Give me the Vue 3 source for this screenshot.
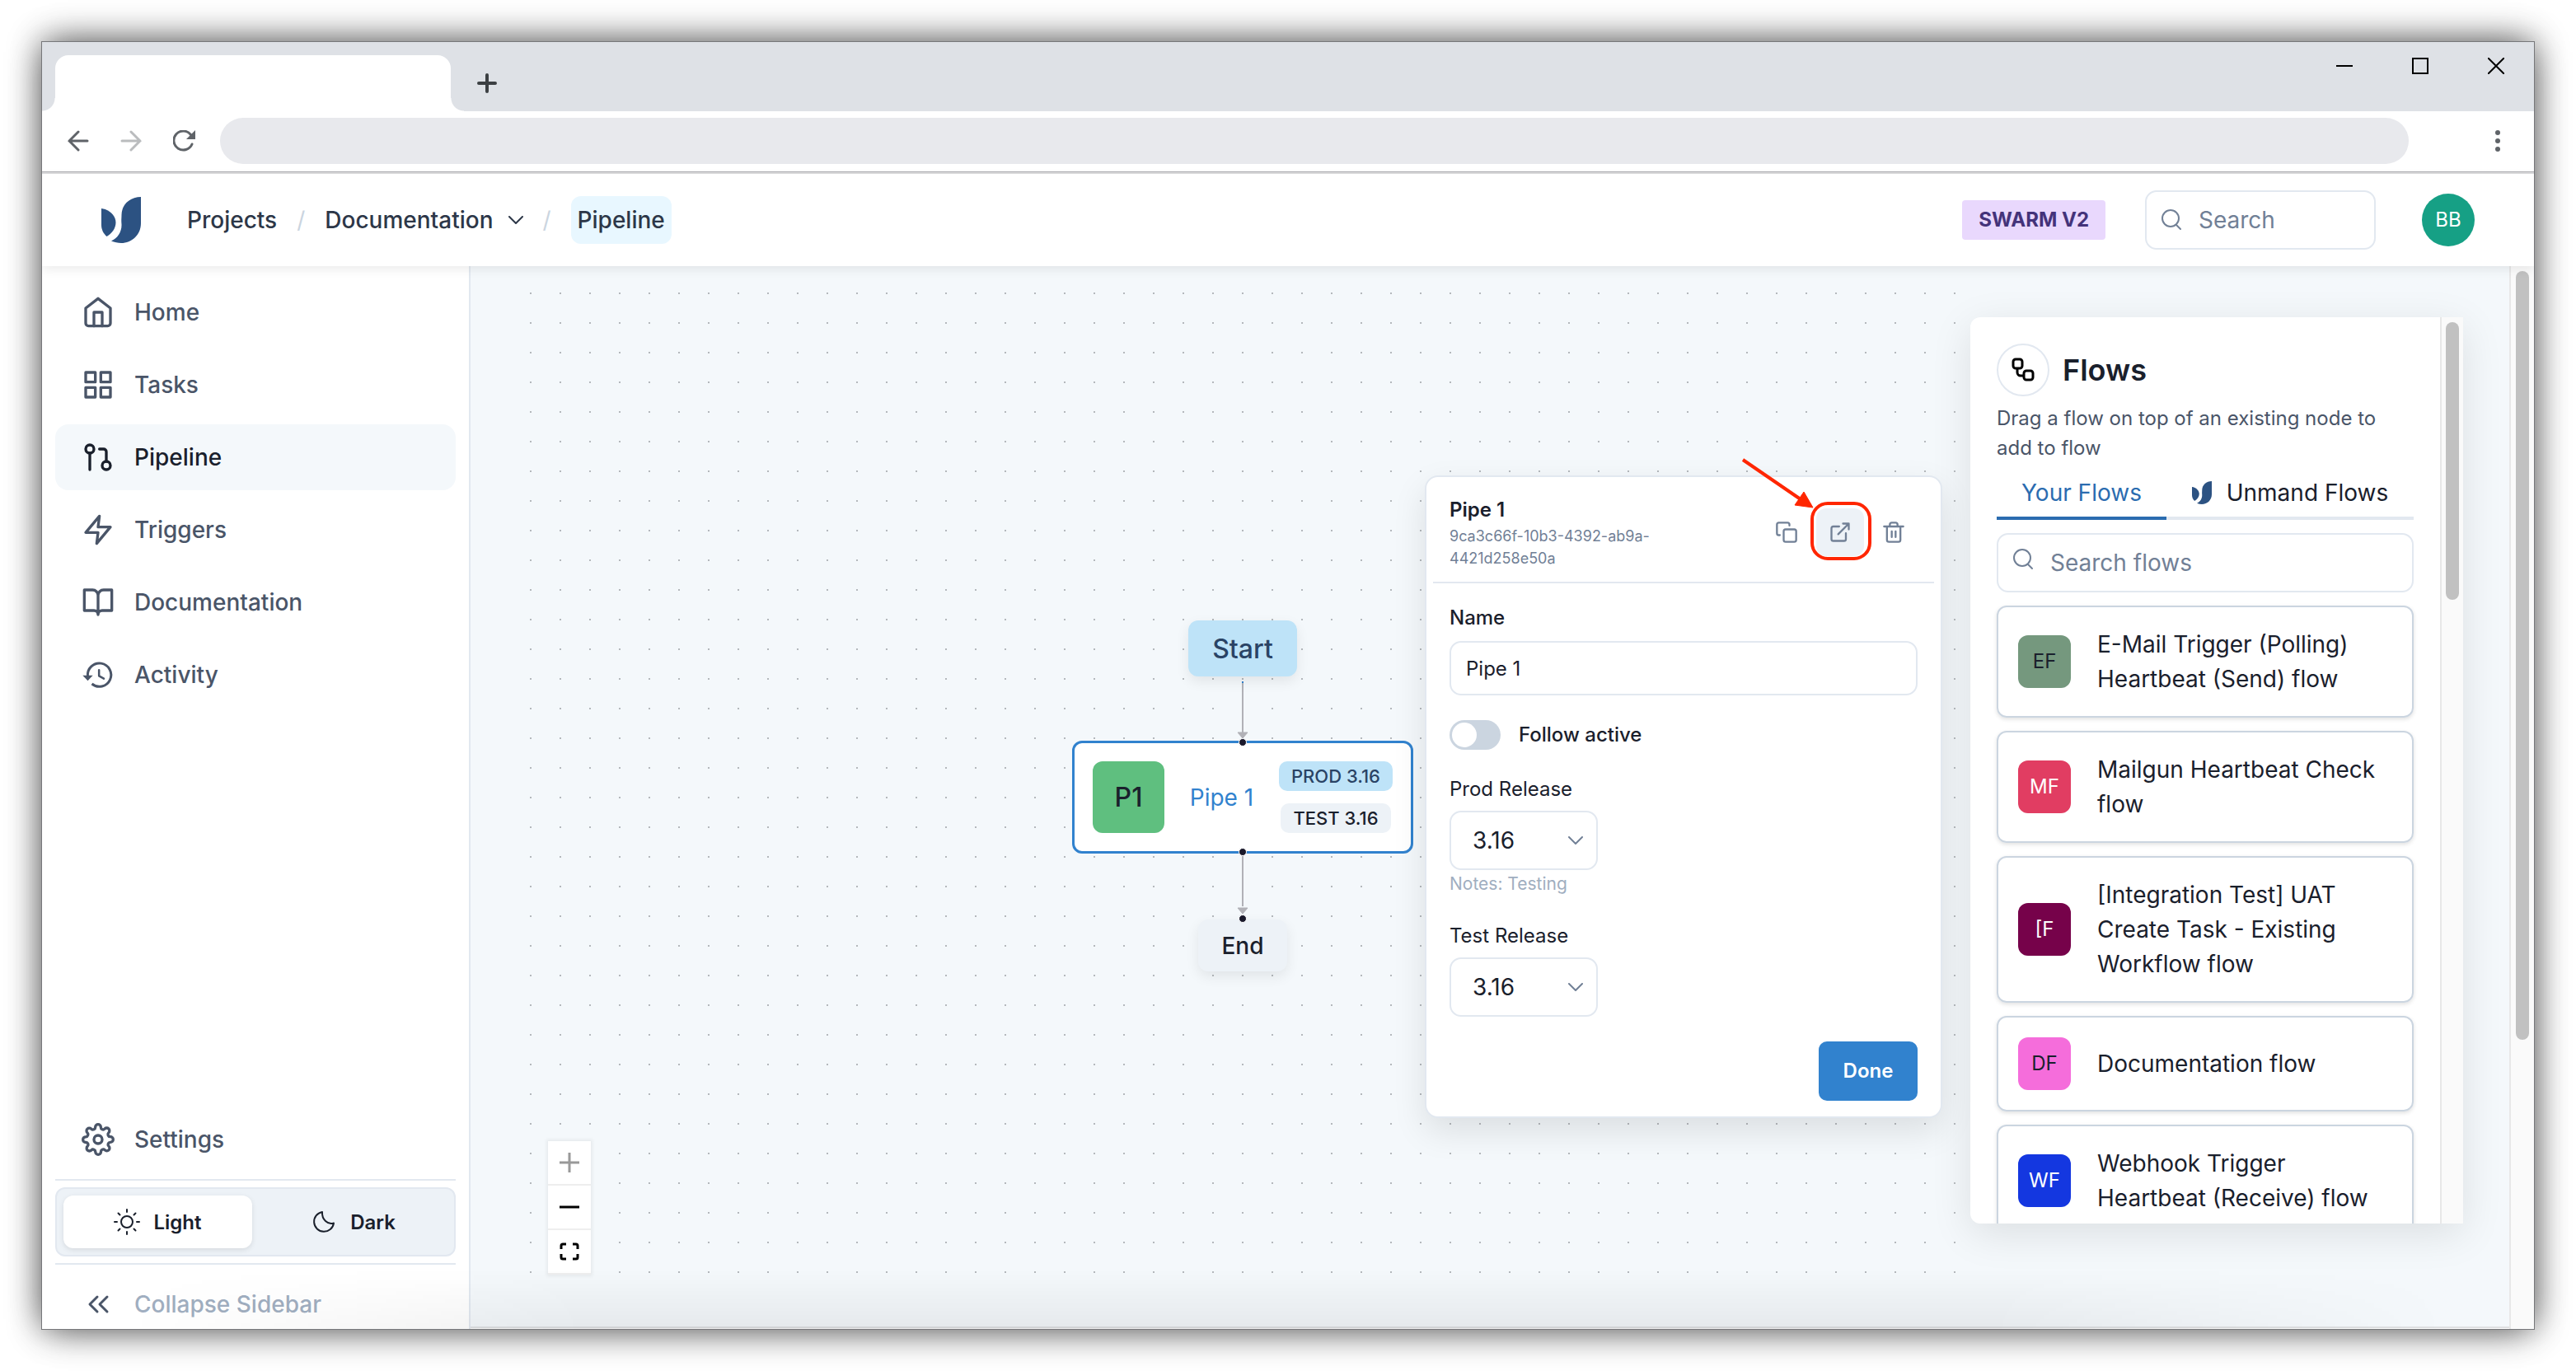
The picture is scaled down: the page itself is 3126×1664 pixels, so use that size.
<script setup>
import { ref } from 'vue'

const navItems = [
  { label: 'Home', icon: 'home' },
  { label: 'Tasks', icon: 'grid' },
  { label: 'Pipeline', icon: 'pipeline', active: true },
  { label: 'Triggers', icon: 'zap' },
  { label: 'Documentation', icon: 'book' },
  { label: 'Activity', icon: 'history' },
]

const flows = [
  { initials: 'EF', name: 'E-Mail Trigger (Polling) Heartbeat (Send) flow', bg: '#75987e', fg: '#1a202c' },
  { initials: 'MF', name: 'Mailgun Heartbeat Check flow', bg: '#e13d62', fg: '#ffffff' },
  { initials: '[F', name: '[Integration Test] UAT Create Task - Existing Workflow flow', bg: '#76024a', fg: '#ffffff' },
  { initials: 'DF', name: 'Documentation flow', bg: '#f56ddb', fg: '#1a202c' },
  { initials: 'WF', name: 'Webhook Trigger Heartbeat (Receive) flow', bg: '#1437e0', fg: '#ffffff' },
]

const pipeName = ref('Pipe 1')
const followActive = ref(false)
const prodRelease = ref('3.16')
const testRelease = ref('3.16')
</script>

<template>
  <div class="stage">
    <div class="window">
      <div class="tabstrip">
        <div class="tab"></div>
        <button class="plain newtab" aria-label="New tab">
          <svg width="24" height="24" viewBox="0 0 24 24" stroke="#3c4043" stroke-width="4" stroke-linecap="round"><path d="M12 2v20M2 12h20" /></svg>
        </button>
        <div class="winctl">
          <button class="plain" aria-label="Minimize"><svg width="20" height="20"><path d="M0 10h20" stroke="#000" stroke-width="2" /></svg></button>
          <button class="plain" aria-label="Maximize"><svg width="20" height="20"><rect x="1" y="1" width="18" height="18" fill="none" stroke="#000" stroke-width="2" /></svg></button>
          <button class="plain" aria-label="Close"><svg width="20" height="20"><path d="M0 0l20 20M20 0L0 20" stroke="#000" stroke-width="2" /></svg></button>
        </div>
      </div>

      <div class="toolbar">
        <button class="plain" aria-label="Back"><svg width="26" height="26" fill="none" stroke="#5f6368" stroke-width="3" stroke-linecap="round"><path d="M24 13H2M13 2L2 13l11 11" /></svg></button>
        <button class="plain" aria-label="Forward"><svg width="26" height="26" fill="none" stroke="#babcbe" stroke-width="3" stroke-linecap="round"><path d="M2 13h22M13 2l11 11-11 11" /></svg></button>
        <button class="plain" aria-label="Reload"><svg width="28" height="26" fill="none"><path d="M23 17A11.500 11.500 0 1 1 21.500 5.500" stroke="#5f6368" stroke-width="3" stroke-linecap="round" /><path d="M27 0v11H16z" fill="#5f6368" /></svg></button>
        <div class="address"></div>
        <button class="plain" aria-label="Menu"><svg width="8" height="26" fill="#5f6368"><circle cx="4" cy="3" r="3" /><circle cx="4" cy="13" r="3" /><circle cx="4" cy="23" r="3" /></svg></button>
      </div>

      <header class="header">
        <svg class="logo" width="48" height="56" viewBox="0 0 48 56" fill="#2c5282"><path d="M0 14C10 15 17.500 23 17.500 31C17.500 38 13 44 6.500 48C2 44 0 39 0 34Z" /><path d="M48 0V32C48 46 37 56 24 56C20 56 16 55 12 53.500C20 50 25 42 24.500 33C24 28 24.500 26 24.500 22C24.500 9 35 0 48 0Z" /></svg>
        <nav class="crumbs" aria-label="Breadcrumb">
          <a href="#">Projects</a>
          <span class="slash">/</span>
          <a href="#" class="crumb-menu">Documentation
            <svg width="18" height="10" fill="none" stroke="#2d3748" stroke-width="2" stroke-linecap="round" stroke-linejoin="round"><path d="M1 1l8 8 8-8" /></svg>
          </a>
          <span class="slash">/</span>
          <a href="#" class="current">Pipeline</a>
        </nav>
        <span class="version">SWARM V2</span>
        <label class="search top-search">
          <svg width="26" height="26" viewBox="0 0 26 26" fill="none" stroke="#718096" stroke-width="2" stroke-linecap="round"><circle cx="12" cy="11" r="10" /><path d="M19 19l5 5" /></svg>
          <input type="text" placeholder="Search" aria-label="Search" />
        </label>
        <span class="user">BB</span>
      </header>

      <div class="body">
        <aside class="sidebar">
          <a v-for="item in navItems" :key="item.label" href="#" class="nav" :class="{ active: item.active }">
            <svg width="40" height="40" viewBox="0 0 24 24" fill="none" stroke="currentColor" stroke-width="2" stroke-linecap="round" stroke-linejoin="round">
              <template v-if="item.icon === 'home'"><path d="M3 9l9-7 9 7v11a2 2 0 0 1-2 2H5a2 2 0 0 1-2-2z" /><path d="M9 22V12h6v10" /></template>
              <template v-else-if="item.icon === 'grid'"><rect x="3" y="3" width="7" height="7" /><rect x="14" y="3" width="7" height="7" /><rect x="14" y="14" width="7" height="7" /><rect x="3" y="14" width="7" height="7" /></template>
              <template v-else-if="item.icon === 'pipeline'"><circle cx="18" cy="18" r="3" /><circle cx="6" cy="6" r="3" /><path d="M13 6h3a2 2 0 0 1 2 2v7M6 9v12" /></template>
              <template v-else-if="item.icon === 'zap'"><path d="M13 2L3 14h9l-1 8 10-12h-9l1-8z" /></template>
              <template v-else-if="item.icon === 'book'"><path d="M2 3h6a4 4 0 0 1 4 4v14a3 3 0 0 0-3-3H2zM22 3h-6a4 4 0 0 0-4 4v14a3 3 0 0 1 3-3h7z" /></template>
              <template v-else><path d="M4.500 13A8.500 8.500 0 1 1 7.500 18.600" stroke-width="1.800" stroke-linecap="butt" /><path d="M.8 12.500h7.400L4.500 16.300z" fill="currentColor" stroke="none" /><path d="M12.700 8.500v4.300l3.500 2" stroke-width="1.500" /></template>
            </svg>
            {{ item.label }}
          </a>
          <div class="grow"></div>
          <a href="#" class="nav">
            <svg width="40" height="40" viewBox="0 0 24 24" fill="none" stroke="currentColor" stroke-width="2" stroke-linecap="round" stroke-linejoin="round"><circle cx="12" cy="12" r="3" /><path d="M19.400 15a1.650 1.650 0 0 0 .33 1.820l.06.06a2 2 0 0 1 0 2.830 2 2 0 0 1-2.830 0l-.06-.06a1.650 1.650 0 0 0-1.820-.33 1.650 1.650 0 0 0-1 1.510V21a2 2 0 0 1-2 2 2 2 0 0 1-2-2v-.09A1.650 1.650 0 0 0 9 19.400a1.650 1.650 0 0 0-1.820.33l-.06.06a2 2 0 0 1-2.830 0 2 2 0 0 1 0-2.830l.06-.06a1.650 1.650 0 0 0 .33-1.820 1.650 1.650 0 0 0-1.510-1H3a2 2 0 0 1-2-2 2 2 0 0 1 2-2h.09A1.650 1.650 0 0 0 4.600 9a1.650 1.650 0 0 0-.33-1.820l-.06-.06a2 2 0 0 1 0-2.830 2 2 0 0 1 2.830 0l.06.06a1.650 1.650 0 0 0 1.820.33H9a1.650 1.650 0 0 0 1-1.510V3a2 2 0 0 1 2-2 2 2 0 0 1 2 2v.09a1.650 1.650 0 0 0 1 1.510 1.650 1.650 0 0 0 1.820-.33l.06-.06a2 2 0 0 1 2.830 0 2 2 0 0 1 0 2.830l-.06.06a1.650 1.650 0 0 0-.33 1.820V9a1.650 1.650 0 0 0 1.510 1H21a2 2 0 0 1 2 2 2 2 0 0 1-2 2h-.09a1.650 1.650 0 0 0-1.510 1z" /></svg>
            Settings
          </a>
          <hr class="rule" />
          <div class="theme">
            <button class="theme-btn on">
              <svg width="32" height="32" viewBox="0 0 32 32" fill="none" stroke="currentColor" stroke-width="2" stroke-linecap="round"><circle cx="16" cy="16" r="7" /><path d="M16 1v3M16 28v3M1 16h3M28 16h3M5.500 5.500l2 2M24.500 24.500l2 2M5.500 26.500l2-2M24.500 7.500l2-2" /></svg>
              Light
            </button>
            <button class="theme-btn">
              <svg width="32" height="32" viewBox="0 0 32 32" fill="none" stroke="currentColor" stroke-width="2" stroke-linejoin="round"><path d="M14 4A11 13 0 0 0 28 17.500A12 12 0 1 1 14 4Z" /></svg>
              Dark
            </button>
          </div>
          <hr class="rule" />
          <button class="nav collapse">
            <svg width="40" height="40" viewBox="0 0 40 40" fill="none" stroke="currentColor" stroke-width="3" stroke-linecap="round" stroke-linejoin="round"><path d="M19 11l-9 9 9 9M31 11l-9 9 9 9" /></svg>
            <span>Collapse Sidebar</span>
          </button>
        </aside>

        <div class="content">
          <main class="main">
            <section class="canvas">
              <svg class="edges" width="20" height="300" viewBox="0 0 20 300">
                <g stroke="#b1b1b7" stroke-width="2"><path d="M10 6v62M10 212v66" /></g>
                <g fill="#b1b1b7" stroke="#b1b1b7" stroke-linejoin="round"><path d="M4 67h12l-6 7zM4 280h12l-6 7z" /></g>
                <path d="M10 5v2" stroke="#3182ce" stroke-width="2" />
              </svg>
              <div class="node start">Start</div>
              <div class="node pipe">
                <span class="pipe-avatar">P1</span>
                <span class="pipe-name">Pipe 1</span>
                <span class="pipe-tags"><span class="tag prod">PROD 3.16</span><span class="tag">TEST 3.16</span></span>
                <i class="handle top"></i>
                <i class="handle bottom"></i>
              </div>
              <div class="node end">End<i class="handle top"></i></div>

              <div class="controls">
                <button aria-label="Zoom in" disabled><svg width="24" height="24"><path d="M12 0v24M0 12h24" stroke="#999" stroke-width="3" /></svg></button>
                <button aria-label="Zoom out"><svg width="24" height="24"><path d="M0 12h24" stroke="#000" stroke-width="3" /></svg></button>
                <button aria-label="Fit view"><svg width="24" height="22" fill="none" stroke="#000" stroke-width="3"><path d="M2 8V4a2 2 0 0 1 2-2h4M16 2h4a2 2 0 0 1 2 2v4M22 14v4a2 2 0 0 1-2 2h-4M8 20H4a2 2 0 0 1-2-2v-4" /></svg></button>
              </div>

              <form class="popover" @submit.prevent>
                <div class="pop-head">
                  <div class="pop-title">
                    <h2>Pipe 1</h2>
                    <p>9ca3c66f-10b3-4392-ab9a-4421d258e50a</p>
                  </div>
                  <button type="button" class="icon-btn" aria-label="Duplicate"><svg width="28" height="28" viewBox="0 0 24 24"><rect x="9" y="9" width="13" height="13" rx="2" /><path d="M5 15H4a2 2 0 0 1-2-2V4a2 2 0 0 1 2-2h9a2 2 0 0 1 2 2v1" /></svg></button>
                  <button type="button" class="icon-btn hover" aria-label="Open">
                    <svg width="28" height="28" viewBox="0 0 24 24"><path d="M18 13v6a2 2 0 0 1-2 2H5a2 2 0 0 1-2-2V8a2 2 0 0 1 2-2h6M15 3h6v6M10 14L21 3" /></svg>
                    <svg class="callout" width="164" height="132" viewBox="0 0 164 132"><rect class="ring" x="88" y="59" width="70" height="67" rx="19" /><path class="shaft" d="M4 6L74 54" /><path class="tip" d="M89 64L78 45L67 61Z" /></svg>
                  </button>
                  <button type="button" class="icon-btn" aria-label="Delete"><svg width="28" height="28" viewBox="0 0 24 24"><path d="M2 6h20M19 6v14a2 2 0 0 1-2 2H7a2 2 0 0 1-2-2V6m3 0V4a2 2 0 0 1 2-2h4a2 2 0 0 1 2 2v2M10 11v6M14 11v6" /></svg></button>
                </div>
                <div class="pop-body">
                  <div class="field name-field">
                    <label class="medium" for="pipe-name">Name</label>
                    <input id="pipe-name" v-model="pipeName" class="text-input" type="text" />
                  </div>
                  <label class="switch"><input v-model="followActive" type="checkbox" />Follow active</label>
                  <div class="field">
                    <label for="prod-release">Prod Release</label>
                    <span class="select"><select id="prod-release" v-model="prodRelease"><option>3.16</option></select><svg width="18" height="10"><path d="M1 1l8 8 8-8" /></svg></span>
                    <p class="notes">Notes: Testing</p>
                  </div>
                  <div class="field">
                    <label for="test-release">Test Release</label>
                    <span class="select"><select id="test-release" v-model="testRelease"><option>3.16</option></select><svg width="18" height="10"><path d="M1 1l8 8 8-8" /></svg></span>
                  </div>
                  <button type="submit" class="done">Done</button>
                </div>
              </form>
            </section>

            <section class="panel">
              <div class="panel-content">
                <div class="panel-title">
                  <span class="badge"><svg width="32" height="32" viewBox="0 0 32 32" fill="none" stroke="#000" stroke-width="3"><rect x="4" y="3" width="11" height="11" rx="3" /><rect x="17" y="17" width="11" height="11" rx="3" /><path d="M9 14v5a4 4 0 0 0 4 4h4" /></svg></span>
                  <h1>Flows</h1>
                </div>
                <p class="hint">Drag a flow on top of an existing node to add to flow</p>
                <div class="tabs">
                  <button class="tab-btn on">Your Flows</button>
                  <button class="tab-btn">
                    <svg width="24" height="28" viewBox="0 0 48 56" fill="#2c5282"><path d="M0 14C10 15 17.500 23 17.500 31C17.500 38 13 44 6.500 48C2 44 0 39 0 34Z" /><path d="M48 0V32C48 46 37 56 24 56C20 56 16 55 12 53.500C20 50 25 42 24.500 33C24 28 24.500 26 24.500 22C24.500 9 35 0 48 0Z" /></svg>
                    Unmand Flows
                  </button>
                </div>
                <label class="search">
                  <svg class="raised" width="26" height="26" viewBox="0 0 26 26" fill="none" stroke="#718096" stroke-width="2" stroke-linecap="round"><circle cx="12" cy="11" r="10" /><path d="M19 19l5 5" /></svg>
                  <input type="text" placeholder="Search flows" aria-label="Search flows" />
                </label>
                <article v-for="flow in flows" :key="flow.initials" class="card">
                  <span class="avatar" :style="{ background: flow.bg, color: flow.fg }">{{ flow.initials }}</span>
                  <span>{{ flow.name }}</span>
                </article>
              </div>
              <div class="track"><div class="thumb short"></div></div>
            </section>
          </main>
        </div>
        <div class="track page-track"><div class="thumb"></div></div>
      </div>
      <div class="fade"></div>
    </div>
  </div>
</template>

<style>
body { background: #fff; }
</style>

<style scoped>
* { box-sizing: border-box; }
h1, h2, p { margin: 0; }
a { color: inherit; text-decoration: none; }
svg { flex: none; display: block; }
button, input, select { font: inherit; color: inherit; }
.plain { border: 0; background: none; padding: 0; }

.stage {
  height: 100vh;
  padding: 50px;
  display: flex;
  font-family: Inter, "Liberation Sans", sans-serif;
  font-size: 28px;
  color: #1a202c;
}
.window {
  position: relative;
  flex: 1;
  min-width: 0;
  display: flex;
  flex-direction: column;
  overflow: hidden;
  background: #fff;
  border: 1px solid #76777a;
  box-shadow: 0 0 38px rgba(0, 0, 0, .45), 0 10px 44px -10px rgba(0, 0, 0, .3), 0 -10px 44px -10px rgba(0, 0, 0, .3);
}

/* Browser chrome */
.tabstrip { display: flex; align-items: flex-end; height: 84px; padding: 0 36px 0 16px; background: #dee1e6; flex: none; }
.tab { position: relative; width: 480px; height: 68px; background: #fff; border-radius: 16px 16px 0 0; }
.tab::before, .tab::after { content: ""; position: absolute; bottom: 0; width: 16px; height: 16px; }
.tab::before { left: -16px; background: radial-gradient(circle at 0 0, transparent 15px, #fff 16px); }
.tab::after { right: -16px; background: radial-gradient(circle at 100% 0, transparent 15px, #fff 16px); }
.newtab { margin: 0 0 22px 32px; }
.winctl { display: flex; gap: 72px; margin-left: auto; margin-bottom: 45px; }
.toolbar { display: flex; align-items: center; gap: 38px; height: 76px; padding: 0 40px 3px 31px; border-bottom: 2px solid #dbdbdd; box-shadow: inset 0 -1px #b0b0b4; flex: none; }
.address { flex: 1; height: 56px; margin: 0 66px 0 -9px; border-radius: 28px; background: #e8e9ed; }

/* App header */
.header { position: relative; z-index: 2; display: flex; align-items: center; height: 112px; padding: 0 72px; background: #fff; box-shadow: 0 4px 12px rgba(0, 0, 0, .08); color: #2d3748; flex: none; }
.crumbs { display: flex; align-items: center; gap: 24px; margin-left: 56px; font-weight: 500; }
.crumb-menu { display: flex; align-items: center; gap: 18px; }
.slash { color: #cbd5e0; font-weight: 400; }
.current { line-height: 58px; padding: 0 8px; border-radius: 12px; background: #e8f7ff; }
.version { margin-left: auto; padding: 0 20px; line-height: 48px; font-size: 24px; font-weight: 700; color: #44337a; background: #e9d8fd; border-radius: 4px; }
.search { display: flex; align-items: center; gap: 20px; height: 72px; padding: 0 18px 0 17px; border: 2px solid #e2e8f0; border-radius: 14px; background: #fff; }
.search input { flex: 1; min-width: 0; border: 0; outline: 0; padding: 0; background: none; }
.search input::placeholder { color: #718096; opacity: 1; }
.top-search { width: 280px; margin: 0 56px 0 48px; }
.raised { margin-bottom: 8px; }
.user { width: 64px; line-height: 64px; border-radius: 50%; background: #16a085; color: #fff; font-size: 24px; text-align: center; }

/* Sidebar */
.body { flex: 1; min-height: 0; display: flex; }
.sidebar { width: 520px; flex: none; display: flex; flex-direction: column; gap: 8px; padding: 16px 16px 0; border-right: 2px solid #e2e8f0; background: #fff; }
.nav { display: flex; align-items: center; gap: 24px; height: 80px; padding: 0 32px; border: 0; border-radius: 16px; background: none; color: #4a5568; font-weight: 500; flex: none; }
.nav.active { background: #f4f8fb; color: #1a202c; }
.grow { flex: 1; }
.rule { width: 100%; margin: 0; border: 0; border-top: 2px solid #e2e8f0; flex: none; }
.theme { display: flex; gap: 8px; height: 84px; padding: 8px; border: 2px solid #e2e8f0; border-radius: 12px; background: #edf2f7; flex: none; }
.theme-btn { flex: 1; display: flex; align-items: center; justify-content: center; gap: 16px; border: 0; border-radius: 12px; background: none; font-size: 24px; font-weight: 600; }
.theme-btn.on { background: #fff; box-shadow: 0 2px 6px rgba(0, 0, 0, .1); }
.collapse { height: 70px; padding-top: 10px; }
.collapse span { color: #a0aec0; }

/* Work area */
.content { flex: 1; min-width: 0; display: flex; background: #fafafa; padding-bottom: 1px; }
.main { flex: 1; min-width: 0; display: flex; background: #f4f8fb; border-bottom: 2px solid #dfe1e3; padding: 0 56px 0 48px; }
.canvas { position: relative; flex: 1; min-width: 0; margin: 15px 0 48px; background: radial-gradient(circle, #b4b8bc 1px, transparent 1px) 7px 0 / 36px 36px; }

.edges { position: absolute; left: 879px; top: 484px; }
.node { position: absolute; display: flex; align-items: center; justify-content: center; border-radius: 12px; box-shadow: 0 6px 16px rgba(0, 0, 0, .08); }
.start { left: 823px; top: 415px; width: 132px; height: 68px; background: #bee3f8; color: #2a4365; font-size: 32px; font-weight: 500; }
.pipe { left: 682px; top: 561px; width: 414px; height: 137px; padding: 0 22px; justify-content: space-between; background: #fff; border: 3px solid #3182ce; box-shadow: none; }
.pipe-avatar { width: 87px; line-height: 87px; border-radius: 12px; background: #5fbf7f; font-size: 32px; font-weight: 500; text-align: center; }
.pipe-name { color: #3182ce; }
.pipe-tags { display: flex; flex-direction: column; align-items: center; gap: 15px; }
.tag { padding: 0 15px; line-height: 36px; border-radius: 10px; background: #edf2f7; font-size: 22px; font-weight: 500; }
.tag.prod { background: #bee3f8; color: #2a4365; }
.end { left: 835px; top: 778px; width: 108px; height: 63px; background: #edf2f7; font-weight: 500; }
.handle { position: absolute; left: calc(50% - 5px); width: 10px; height: 10px; border: 1px solid #fff; border-radius: 50%; background: #1a192b; }
.handle.top { top: -6px; }
.handle.bottom { bottom: -6px; }

.controls { position: absolute; left: 46px; bottom: 15px; width: 52px; box-shadow: 0 0 4px 2px rgba(0, 0, 0, .06); }
.controls button { display: flex; align-items: center; justify-content: center; width: 52px; height: 54px; padding: 0; border: 0; border-bottom: 2px solid #eee; background: #fff; }

/* Node popover */
.popover { position: absolute; left: 1110px; top: 239px; width: 628px; border: 2px solid #e2e8f0; border-radius: 16px; background: #fff; font-size: 24px; line-height: 36px; box-shadow: 0 16px 40px rgba(0, 0, 0, .1); }
.pop-head { display: flex; align-items: center; gap: 7px; margin: 0 8px; padding: 22px 20px 15px; border-bottom: 2px solid #e2e8f0; }
.pop-title { flex: 1; padding-right: 80px; }
.pop-title h2 { font-size: 24px; font-weight: 600; }
.pop-title p { font-size: 18px; line-height: 27px; color: #718096; }
.icon-btn { position: relative; display: flex; align-items: center; justify-content: center; width: 58px; height: 58px; padding: 0; border: 0; border-radius: 12px; background: none; }
.icon-btn.hover { background: #edf2f7; }
.icon-btn svg { fill: none; stroke: #718096; stroke-width: 2; stroke-linecap: round; stroke-linejoin: round; }
.icon-btn .callout { position: absolute; left: -93px; top: -65px; stroke: #ff2600; stroke-width: 4; stroke-linecap: butt; pointer-events: none; }
.callout .tip { fill: #ff2600; stroke-width: 1; }
.pop-body { display: flex; flex-direction: column; gap: 30px; padding: 24px 28px 19px; }
.field { display: flex; flex-direction: column; gap: 8px; }
.name-field { gap: 10px; }
.medium, .switch { font-weight: 500; }
.text-input { height: 66px; padding: 0 18px; border: 2px solid #e2e8f0; border-radius: 14px; background: #fff; outline: 0; }
.switch { display: flex; align-items: center; gap: 22px; }
.switch input { appearance: none; position: relative; width: 62px; height: 36px; margin: 0; border-radius: 18px; background: #cbd5e0; }
.switch input::before { content: ""; position: absolute; left: 3px; top: 3px; width: 30px; height: 30px; border-radius: 50%; background: #fff; }
.select { position: relative; width: 180px; font-size: 28px; }
.select select { appearance: none; display: block; width: 100%; height: 72px; padding: 0 26px; border: 2px solid #e2e8f0; border-radius: 14px; background: #fff; }
.select svg { position: absolute; right: 18px; top: 31px; fill: none; stroke: #718096; stroke-width: 2; stroke-linecap: round; stroke-linejoin: round; pointer-events: none; }
.notes { margin-top: -6px; font-size: 21px; line-height: 30px; color: #a0aec0; }
.done { align-self: flex-end; width: 120px; height: 72px; padding: 0; border: 0; border-radius: 10px; background: #3182ce; color: #fff; font-weight: 600; }

/* Flow library */
.panel { flex: none; width: 598px; display: flex; margin: 62px 0 125px; background: #fff; border-radius: 12px 0 0 12px; box-shadow: 0 12px 50px rgba(0, 0, 0, .1); overflow: hidden; }
.panel-content { flex: 1; min-width: 0; padding: 32px 32px 0; overflow: hidden; }
.panel-title { display: flex; align-items: center; gap: 16px; height: 64px; }
.panel-title h1 { font-size: 36px; font-weight: 600; }
.badge { display: flex; align-items: center; justify-content: center; width: 64px; height: 64px; border: 2px solid #e2e8f0; border-radius: 50%; }
.hint { margin-top: 9px; font-size: 24px; line-height: 36px; color: #4a5568; }
.tabs { display: flex; margin-top: 5px; }
.tab-btn { display: flex; align-items: center; justify-content: center; gap: 18px; height: 64px; padding: 2px 30px 0; border: 0; border-bottom: 4px solid #e2e8f0; background: none; white-space: nowrap; }
.tab-btn:last-child { flex: 1; }
.tab-btn.on { color: #2b6cb0; border-color: #2b6cb0; }
.panel .search { margin: 16px 0; }
.card { display: flex; align-items: center; gap: 32px; margin-bottom: 16px; padding: 24px; border: 2px solid #cbd5e0; border-radius: 12px; line-height: 42px; box-shadow: 0 2px 5px rgba(0, 0, 0, .12); }
.avatar { flex: none; width: 64px; line-height: 64px; border-radius: 12px; font-size: 24px; text-align: center; }

.track { flex: none; width: 28px; padding: 6px 5px; border-left: 2px solid #e8e8e8; background: #fafafa; }
.page-track { width: 30px; padding-left: 6px; }
.thumb { width: 16px; height: 73%; border-radius: 8px; background: #c1c1c1; }
.thumb.short { height: 31%; }

.fade { position: absolute; z-index: 3; left: 100px; right: 100px; bottom: 0; height: 72px; background: linear-gradient(transparent, rgba(0, 0, 0, .06)); mask-image: linear-gradient(90deg, transparent, #000 20%, #000 80%, transparent); pointer-events: none; }
</style>
